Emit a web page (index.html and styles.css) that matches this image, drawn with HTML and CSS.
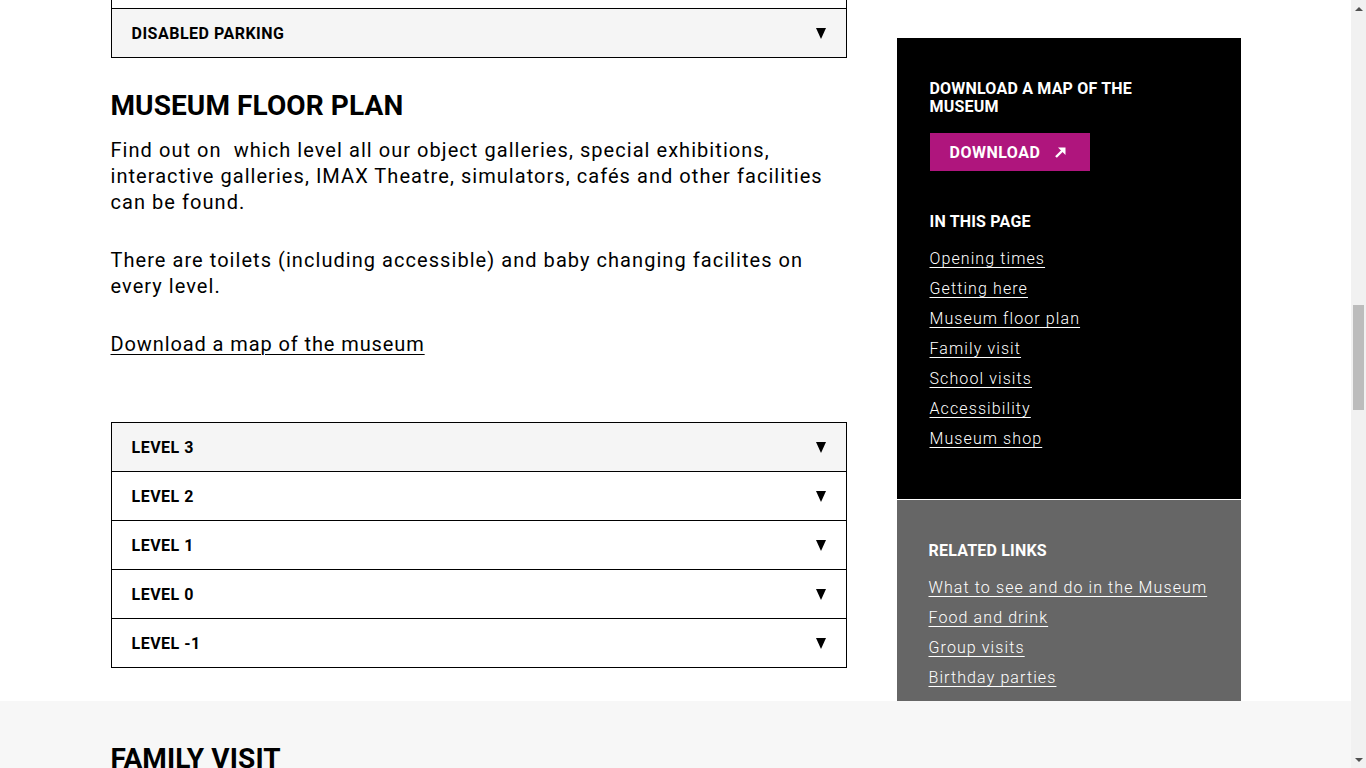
FILE: index.html
```html
<!DOCTYPE html>
<html lang="en">
<head>
<meta charset="utf-8">
<title>Visit - Museum floor plan</title>
<link rel="stylesheet" href="styles.css">
</head>
<body>
<div class="page">
<section class="section section-white">
  <div class="container">
    <div class="main">
      <div class="accordion accordion-top">
        <div class="acc-item"><span class="acc-title"></span><svg class="acc-arrow" viewBox="0 0 10 11"><polygon points="0,0 10,0 5,11"/></svg></div>
        <div class="acc-item acc-active"><span class="acc-title">DISABLED PARKING</span><svg class="acc-arrow" viewBox="0 0 10 11"><polygon points="0,0 10,0 5,11"/></svg></div>
      </div>

      <h2 class="heading">MUSEUM FLOOR PLAN</h2>
      <p class="text">Find out on&nbsp; which level all our object galleries, special exhibitions, interactive galleries, IMAX Theatre, simulators, cafés and other facilities can be found.</p>
      <p class="text">There are toilets (including accessible) and baby changing facilites on every level.</p>
      <p class="text"><a class="text-link" href="#">Download a map of the museum</a></p>

      <div class="accordion accordion-levels">
        <div class="acc-item acc-active"><span class="acc-title">LEVEL 3</span><svg class="acc-arrow" viewBox="0 0 10 11"><polygon points="0,0 10,0 5,11"/></svg></div>
        <div class="acc-item"><span class="acc-title">LEVEL 2</span><svg class="acc-arrow" viewBox="0 0 10 11"><polygon points="0,0 10,0 5,11"/></svg></div>
        <div class="acc-item"><span class="acc-title">LEVEL 1</span><svg class="acc-arrow" viewBox="0 0 10 11"><polygon points="0,0 10,0 5,11"/></svg></div>
        <div class="acc-item"><span class="acc-title">LEVEL 0</span><svg class="acc-arrow" viewBox="0 0 10 11"><polygon points="0,0 10,0 5,11"/></svg></div>
        <div class="acc-item"><span class="acc-title">LEVEL -1</span><svg class="acc-arrow" viewBox="0 0 10 11"><polygon points="0,0 10,0 5,11"/></svg></div>
      </div>
    </div>

    <aside class="sidebar">
      <div class="side-box side-black">
        <h3 class="side-title side-title-narrow">DOWNLOAD A MAP OF THE MUSEUM</h3>
        <a class="btn-download" href="#">DOWNLOAD<svg class="btn-icon" viewBox="0 0 13 13"><path d="M2 11 L10 3" fill="none" stroke="#fff" stroke-width="2.4"/><polygon points="4,1.5 11.5,1.5 11.5,9" fill="#fff"/></svg></a>
        <h3 class="side-title side-title-gap">IN THIS PAGE</h3>
        <ul class="side-links">
          <li><a href="#">Opening times</a></li>
          <li><a href="#">Getting here</a></li>
          <li><a href="#">Museum floor plan</a></li>
          <li><a href="#">Family visit</a></li>
          <li><a href="#">School visits</a></li>
          <li><a href="#">Accessibility</a></li>
          <li><a href="#">Museum shop</a></li>
        </ul>
      </div>
      <div class="side-box side-gray">
        <h3 class="side-title">RELATED LINKS</h3>
        <ul class="side-links">
          <li><a href="#">What to see and do in the Museum</a></li>
          <li><a href="#">Food and drink</a></li>
          <li><a href="#">Group visits</a></li>
          <li><a href="#">Birthday parties</a></li>
        </ul>
      </div>
    </aside>
  </div>
</section>

<section class="section section-light">
  <div class="container">
    <div class="main">
      <h2 class="heading heading-first">FAMILY VISIT</h2>
    </div>
  </div>
</section>
</div>

<div class="scrollbar" aria-hidden="true">
  <span class="sb-arrow sb-up"></span>
  <span class="sb-track"><span class="sb-thumb"></span></span>
  <span class="sb-arrow sb-down"></span>
</div>
</body>
</html>
```

FILE: styles.css
```css
body {
  margin: 0;
  background: #fff;
  color: #000;
  font-family: Roboto, "Liberation Sans", Arial, sans-serif;
}

.page {
  margin-right: 15px;
}

.section-white {
  background: #fff;
}

.section-light {
  background: #f7f7f7;
  padding: 41px 0 0;
  height: 60px;
  overflow: hidden;
}

.container {
  max-width: 1130px;
  margin: 0 auto;
  display: flex;
  gap: 50px;
  align-items: flex-start;
}

.main {
  width: 736px;
  flex: 0 0 736px;
}

.accordion-top {
  margin-top: -41px;
}

.acc-item {
  display: flex;
  align-items: center;
  justify-content: space-between;
  height: 48px;
  padding: 0 20px;
  border: 1px solid #000;
  background: #fff;
}

.acc-item + .acc-item {
  border-top: none;
}

.acc-active {
  background: #f5f5f5;
}

.acc-title {
  font-weight: 700;
  font-size: 16px;
  letter-spacing: 0.5px;
  color: #000;
}

.acc-arrow {
  width: 10px;
  height: 11px;
  fill: #000;
}

.heading {
  margin: 31px 0 14px;
  font-size: 28px;
  line-height: 34px;
  font-weight: 700;
  letter-spacing: 0.1px;
}

.heading-first {
  margin-top: 0;
}

.text {
  margin: 0 0 32px;
  font-size: 20px;
  line-height: 26px;
  font-weight: 400;
  letter-spacing: 1.05px;
  color: #000;
}

.text-link {
  color: #000;
  letter-spacing: 0.9px;
  text-decoration: underline;
  text-decoration-thickness: 1px;
  text-underline-offset: 3px;
}

.accordion-levels {
  margin-top: 65px;
}

.sidebar {
  width: 344px;
  flex: 0 0 344px;
  margin-top: 38px;
  display: flex;
  flex-direction: column;
}

.side-box {
  color: #fff;
}

.side-black {
  background: #000;
  padding: 42px 33px 45px;
}

.side-gray {
  background: #666;
  margin-top: 1px;
  padding: 42px 16px 8px 32px;
}

.side-title {
  margin: 0;
  font-size: 16px;
  line-height: 18px;
  font-weight: 700;
  letter-spacing: 0.2px;
}

.side-title-narrow {
  max-width: 240px;
}

.side-title-gap {
  margin-top: 42px;
}

.btn-download {
  display: inline-flex;
  align-items: center;
  margin-top: 17px;
  height: 38px;
  padding: 0 23px 0 20px;
  background: #af157d;
  color: #fff;
  font-weight: 700;
  font-size: 16px;
  letter-spacing: 0.5px;
  text-decoration: none;
  gap: 14px;
}

.btn-icon {
  width: 13px;
  height: 13px;
}

.side-links {
  list-style: none;
  margin: 13px 0 0;
  padding: 0;
}

.side-links li {
  line-height: 30px;
  font-size: 16px;
  white-space: nowrap;
}

.side-links a {
  color: #fff;
  font-weight: 300;
  letter-spacing: 1.1px;
  text-decoration: underline;
  text-decoration-thickness: 1px;
  text-underline-offset: 3px;
}

/* browser scrollbar drawn over the right edge */
.scrollbar {
  position: fixed;
  top: 0;
  right: 0;
  width: 15px;
  height: 100vh;
  background: #f1f1f1;
  display: flex;
  flex-direction: column;
  align-items: center;
}

.sb-arrow {
  flex: 0 0 17px;
  width: 15px;
  display: flex;
  align-items: center;
  justify-content: center;
}

.sb-up::before,
.sb-down::before {
  content: "";
  width: 0;
  height: 0;
  border-left: 4px solid transparent;
  border-right: 4px solid transparent;
}

.sb-up::before {
  border-bottom: 4px solid #505050;
}

.sb-down::before {
  border-top: 4px solid #505050;
}

.sb-track {
  flex: 1;
  width: 100%;
  display: flex;
  flex-direction: column;
  align-items: center;
  padding-top: 288px;
}

.sb-thumb {
  width: 11px;
  height: 105px;
  background: #bcbcbc;
}
```
